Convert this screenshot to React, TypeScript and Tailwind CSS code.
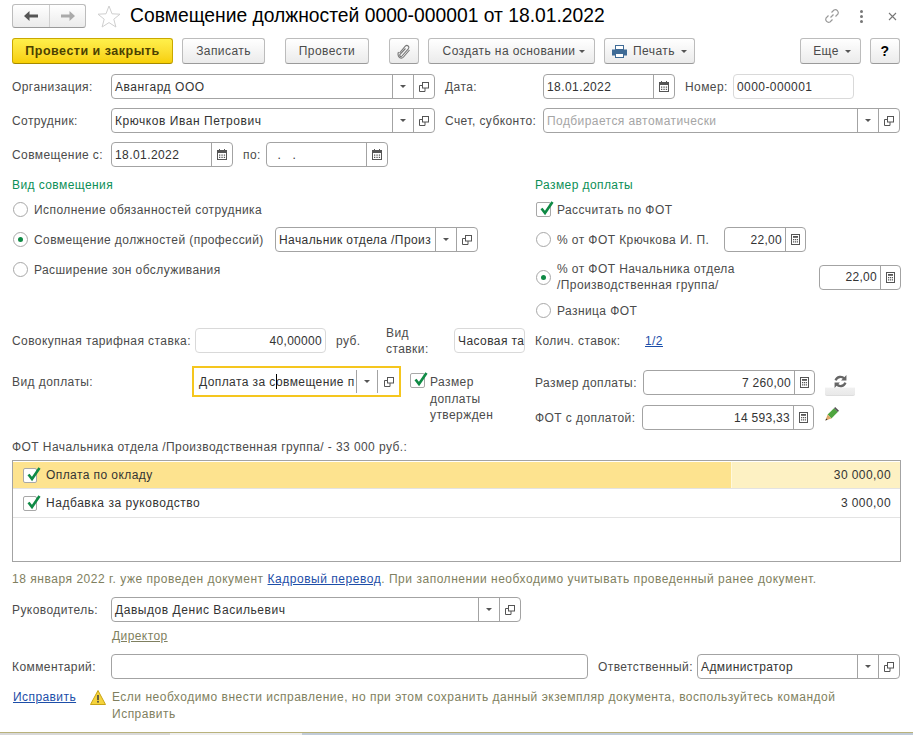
import React from "react";

const CalendarIcon = () => (
  <svg width="10" height="11" viewBox="0 0 10 11" className="block">
    <rect x="0.5" y="1.5" width="9" height="9" fill="#fff" stroke="#555" />
    <rect x="0" y="1.5" width="10" height="2.5" fill="#555" />
    <rect x="2" y="0" width="1" height="2" fill="#555" />
    <rect x="7" y="0" width="1" height="2" fill="#555" />
    <path d="M2 5.5h1.3v1.2H2zM4.4 5.5h1.3v1.2H4.4zM6.8 5.5h1.3v1.2H6.8zM2 7.8h1.3V9H2zM4.4 7.8h1.3V9H4.4zM6.8 7.8h1.3V9H6.8z" fill="#555" />
  </svg>
);

const CalcIcon = () => (
  <svg width="9" height="11" viewBox="0 0 9 11" className="block">
    <rect x="0.5" y="0.5" width="8" height="10" fill="#fff" stroke="#555" />
    <rect x="2" y="2" width="5" height="1.8" fill="#555" />
    <path d="M2 5h1.2v1.2H2zM3.9 5h1.2v1.2H3.9zM5.8 5H7v1.2H5.8zM2 7.3h1.2v1.2H2zM3.9 7.3h1.2v1.2H3.9zM5.8 7.3H7v1.2H5.8z" fill="#555" />
  </svg>
);

const OpenIcon = () => (
  <svg width="10" height="10" viewBox="0 0 10 10" className="block">
    <rect x="3.5" y="0.5" width="6" height="5.5" fill="#fff" stroke="#555" />
    <path d="M3.5 3.5H0.5V9.5H6V6" fill="none" stroke="#555" />
  </svg>
);

const Arrow = ({ color = "#555" }: { color?: string }) => (
  <span
    className="inline-block w-0 h-0 border-l-[3.5px] border-r-[3.5px] border-t-[3.5px] border-l-transparent border-r-transparent"
    style={{ borderTopColor: color }}
  />
);

const Check = () => (
  <svg width="17" height="17" viewBox="0 0 17 17" className="absolute left-[1px] -top-[3px]">
    <path d="M3.5 8.5 L7 13 L14.5 2" fill="none" stroke="#0f8a45" strokeWidth="2.6" />
  </svg>
);

const CheckBox = ({ narrow }: { narrow?: boolean }) => (
  <span
    className={`relative block shrink-0 h-[15px] bg-white border border-[#a8a8a8] rounded-[2px] ${
      narrow ? "w-[14px]" : "w-[15px]"
    }`}
  >
    <Check />
  </span>
);

const Radio = ({ on }: { on?: boolean }) => (
  <span className="flex items-center justify-center shrink-0 w-[15px] h-[15px] rounded-full bg-white border border-[#a8a8a8]">
    {on && <span className="w-[5px] h-[5px] rounded-full bg-[#0f8a45]" />}
  </span>
);

type FieldProps = {
  w: number | string;
  value?: string;
  align?: "right";
  drop?: boolean;
  open?: boolean;
  calendar?: boolean;
  calc?: boolean;
  light?: boolean;
  placeholder?: boolean;
  wide?: boolean;
};

const Field = ({ w, value, align, drop, open, calendar, calc, light, placeholder, wide }: FieldProps) => (
  <div
    className={`flex items-stretch shrink-0 h-[25px] bg-white border rounded-[4px] overflow-hidden ${
      light ? "border-[#d9d9d9]" : "border-[#a3a3a3]"
    }`}
    style={{ width: w }}
  >
    <div
      className={`flex-1 min-w-0 flex items-center px-[3px] whitespace-nowrap overflow-hidden ${
        align === "right" ? "justify-end tracking-[0.3px]" : ""
      } ${wide ? "tracking-[0.55px]" : ""} ${placeholder ? "text-[#a5a5a5]" : "text-[#333]"}`}
    >
      {value}
    </div>
    {drop && (
      <div className="flex items-center justify-center w-[21px] border-l border-[#a3a3a3]">
        <Arrow />
      </div>
    )}
    {open && (
      <div className="flex items-center justify-center w-[21px] border-l border-[#a3a3a3]">
        <OpenIcon />
      </div>
    )}
    {calendar && (
      <div className="flex items-center justify-center w-[21px] border-l border-[#a3a3a3]">
        <CalendarIcon />
      </div>
    )}
    {calc && (
      <div className="flex items-center justify-center w-[20px] border-l border-[#a3a3a3]">
        <CalcIcon />
      </div>
    )}
  </div>
);

const Btn = ({ w, children, className = "" }: { w: number; children: React.ReactNode; className?: string }) => (
  <button
    className={`flex items-center justify-center gap-[6px] shrink-0 h-[26px] rounded-[3px] border border-[#bcbcbc] border-b-[#9a9a9a] bg-gradient-to-b from-white to-[#ebebeb] text-[#4b4b4b] ${className}`}
    style={{ width: w }}
  >
    {children}
  </button>
);

const Label = ({ w, children, className = "" }: { w?: number; children: React.ReactNode; className?: string }) => (
  <span className={`shrink-0 whitespace-nowrap text-[#4b4b4b] ${className}`} style={w ? { width: w } : undefined}>
    {children}
  </span>
);

const RadioRow = ({ on, w, children }: { on?: boolean; w?: number; children: React.ReactNode }) => (
  <div className="flex items-center gap-[6px] pl-px shrink-0" style={w ? { width: w } : undefined}>
    <Radio on={on} />
    <span className="text-[#4b4b4b] whitespace-nowrap">{children}</span>
  </div>
);

export default function App() {
  return (
    <div
      className="flex flex-col w-[913px] h-[735px] overflow-hidden bg-white px-3 pt-1 text-[12px] tracking-[0.42px] leading-[16px]"
      style={{ fontFamily: '"Liberation Sans", Arial, sans-serif' }}
    >
      {/* title */}
      <div className="flex items-center h-[24px]">
        <div className="flex shrink-0 w-[74px] h-[24px] rounded-[3px] border border-[#bcbcbc] border-b-[#9a9a9a] bg-gradient-to-b from-white to-[#ebebeb]">
          <div className="flex items-center justify-center w-[37px] border-r border-[#d0d0d0]">
            <svg width="14" height="10" viewBox="0 0 14 10">
              <path d="M0 5 L5.5 0 V3.5 H14 V6.5 H5.5 V10 Z" fill="#555" />
            </svg>
          </div>
          <div className="flex items-center justify-center flex-1">
            <svg width="14" height="10" viewBox="0 0 14 10">
              <path d="M14 5 L8.5 0 V3.5 H0 V6.5 H8.5 V10 Z" fill="#aaa" />
            </svg>
          </div>
        </div>
        <svg width="24" height="23" viewBox="0 0 24 23" className="ml-[11px] shrink-0">
          <path d="M12 1 L15 8.8 L23 9.2 L16.8 14.2 L18.9 22 L12 17.6 L5.1 22 L7.2 14.2 L1 9.2 L9 8.8 Z" fill="#fff" stroke="#cfcfcf" />
        </svg>
        <div className="ml-[9px] text-[19.3px] tracking-normal text-black whitespace-nowrap">
          Совмещение должностей 0000-000001 от 18.01.2022
        </div>
        <div className="flex items-center ml-auto">
          <svg width="16" height="16" viewBox="0 0 16 16" fill="none" stroke="#999" strokeWidth="1.2">
            <path d="M6.5 9.5 L9.5 6.5" />
            <path d="M7.5 4.5 L10 2 a3 3 0 0 1 4 4 L11.5 8.5" />
            <path d="M8.5 11.5 L6 14 a3 3 0 0 1 -4 -4 L4.5 7.5" />
          </svg>
          <span className="flex flex-col gap-[2px] ml-[20px]">
            <span className="w-[3px] h-[3px] rounded-full bg-[#777]" />
            <span className="w-[3px] h-[3px] rounded-full bg-[#777]" />
            <span className="w-[3px] h-[3px] rounded-full bg-[#777]" />
          </span>
          <svg width="9" height="9" viewBox="0 0 9 9" stroke="#777" strokeWidth="1.1" className="ml-[25px] mr-[4px]">
            <path d="M1 1 L8 8 M8 1 L1 8" />
          </svg>
        </div>
      </div>

      {/* toolbar */}
      <div className="flex items-center mt-[10px]">
        <button className="flex items-center justify-center shrink-0 w-[161px] h-[26px] rounded-[3px] border border-[#c9a800] border-b-[#a58a00] bg-gradient-to-b from-[#fff04a] to-[#f7cf00] text-[#4b4100] font-bold text-[12.5px] tracking-[0.5px]">
          Провести и закрыть
        </button>
        <Btn w={83} className="ml-[9px]">Записать</Btn>
        <Btn w={84} className="ml-[20px]">Провести</Btn>
        <Btn w={30} className="ml-[20px]">
          <svg width="14" height="15" viewBox="0 0 14 15" fill="none" stroke="#777" strokeWidth="1.1">
            <path d="M2.5 9 L8.5 2 a2 2 0 0 1 3 2.6 L5 12 a1.2 1.2 0 0 1 -2 -1.6 L8.5 4.5" />
            <path d="M1.5 8 a5 5 0 0 0 1 5.5 a3 3 0 0 0 4 -0.5 L12.5 6" />
          </svg>
        </Btn>
        <Btn w={167} className="ml-[9px] pl-[5px] !gap-[4px]">
          Создать на основании
          <Arrow />
        </Btn>
        <Btn w={91} className="ml-[9px]">
          <svg width="15" height="13" viewBox="0 0 15 13" className="shrink-0">
            <rect x="3.5" y="0.5" width="8" height="4" fill="#fff" stroke="#3f6b96" />
            <path d="M0 4.5h15v6h-3v-2H3v2H0z" fill="#3f6b96" />
            <rect x="3.5" y="8.5" width="8" height="4" fill="#fff" stroke="#3f6b96" />
          </svg>
          Печать
          <Arrow />
        </Btn>
        <Btn w={61} className="ml-[105px] pl-[3px]">
          Еще
          <Arrow />
        </Btn>
        <Btn w={30} className="ml-[9px] !text-black font-bold text-[14px]">?</Btn>
      </div>

      {/* header fields */}
      <div className="flex items-center mt-[10px]">
        <Label w={99}>Организация:</Label>
        <Field w={324} value="Авангард ООО" drop open wide />
        <Label w={98} className="ml-[10px]">Дата:</Label>
        <Field w={132} value="18.01.2022" calendar />
        <Label w={48} className="ml-[10px]">Номер:</Label>
        <Field w={121} value="0000-000001" light />
      </div>
      <div className="flex items-center mt-[9px]">
        <Label w={99}>Сотрудник:</Label>
        <Field w={324} value="Крючков Иван Петрович" drop open wide />
        <Label w={98} className="ml-[10px]">Счет, субконто:</Label>
        <Field w={357} value="Подбирается автоматически" placeholder drop open />
      </div>
      <div className="flex items-center mt-[9px]">
        <Label w={99}>Совмещение с:</Label>
        <Field w={122} value="18.01.2022" calendar />
        <Label w={23} className="ml-[10px]">по:</Label>
        <Field w={122} value={"\u00a0\u00a0.\u00a0\u00a0\u00a0."} calendar />
      </div>

      {/* two columns */}
      <div className="flex mt-[10px]">
        <div className="w-[523px] shrink-0">
          <div className="h-[14px] leading-[14px] mt-px text-[#0c8f58]">Вид совмещения</div>
          <div className="flex items-center h-[25px] mt-[5px]">
            <RadioRow>Исполнение обязанностей сотрудника</RadioRow>
          </div>
          <div className="flex items-center h-[25px] mt-[5px]">
            <RadioRow on w={263}>Совмещение должностей (профессий)</RadioRow>
            <Field w={203} value="Начальник отдела /Произ" drop open />
          </div>
          <div className="flex items-center h-[25px] mt-[5px]">
            <RadioRow>Расширение зон обслуживания</RadioRow>
          </div>
          <div className="flex items-center h-[25px] mt-[46px]">
            <Label w={183}>Совокупная тарифная ставка:</Label>
            <Field w={131} value="40,00000" align="right" light />
            <Label w={50} className="ml-[10px]">руб.</Label>
            <span className="w-[68px] shrink-0 text-[#4b4b4b] leading-[16px]">
              Вид
              <br />
              ставки:
            </span>
            <Field w={71} value="Часовая та" light />
          </div>
          <div className="flex items-start mt-[13px]">
            <Label w={180} className="mt-[8px]">Вид доплаты:</Label>
            <div className="flex items-stretch shrink-0 w-[209px] h-[31px] border-2 border-[#f5c61e] bg-white">
              <div className="relative flex-1 flex items-center pl-[5px] whitespace-nowrap overflow-hidden text-[#333]">
                Доплата за совмещение п
                <span className="absolute left-[82px] top-[6px] w-px h-[15px] bg-black" />
              </div>
              <div className="flex items-center justify-center w-[21px] my-[2px] border-l border-[#a3a3a3]">
                <Arrow />
              </div>
              <div className="flex items-center justify-center w-[22px] my-[2px] border-l border-[#a3a3a3]">
                <OpenIcon />
              </div>
            </div>
            <div className="flex items-start ml-[9px] mt-[7px] gap-[5px]">
              <CheckBox />
              <span className="text-[#4b4b4b] leading-[16.5px] mt-px">
                Размер
                <br />
                доплаты
                <br />
                утвержден
              </span>
            </div>
          </div>
        </div>

        <div className="flex-1 min-w-0">
          <div className="h-[14px] leading-[14px] mt-px text-[#0c8f58]">Размер доплаты</div>
          <div className="flex items-center h-[25px] mt-[5px] gap-[6px] pl-px">
            <CheckBox />
            <span className="text-[#4b4b4b]">Рассчитать по ФОТ</span>
          </div>
          <div className="flex items-center h-[25px] mt-[5px]">
            <RadioRow w={189}>% от ФОТ Крючкова И. П.</RadioRow>
            <Field w={82} value="22,00" align="right" calc />
          </div>
          <div className="flex items-center justify-between h-[32px] mt-[9px]">
            <RadioRow on>
              % от ФОТ Начальника отдела
              <br />
              /Производственная группа/
            </RadioRow>
            <Field w={82} value="22,00" align="right" calc />
          </div>
          <div className="flex items-center h-[25px] mt-[5px]">
            <RadioRow>Разница ФОТ</RadioRow>
          </div>
          <div className="flex items-center h-[25px] mt-[5px]">
            <Label w={110}>Колич. ставок:</Label>
            <span className="text-[#1d4ea8] underline">1/2</span>
          </div>
          <div className="flex items-center h-[25px] mt-[17px]">
            <Label w={108}>Размер доплаты:</Label>
            <Field w={172} value="7 260,00" align="right" calc />
            <button className="flex items-start justify-center pt-[4px] w-[30px] h-[25px] ml-[10px] mt-px border-b border-[#dddddd] bg-[linear-gradient(#ffffff_68%,#f0f0f0_70%,#e9e9e9)] rounded-[2px]">
              <svg width="13" height="13" viewBox="0 0 12 12" fill="none" stroke="#666" strokeWidth="2.2">
                <path d="M1.5 5 a4.6 4.6 0 0 1 8 -1.5" />
                <path d="M10.5 7 a4.6 4.6 0 0 1 -8 1.5" />
                <path d="M11.5 0 V5 H6.5 Z" fill="#666" stroke="none" />
                <path d="M0.5 12 V7 H5.5 Z" fill="#666" stroke="none" />
              </svg>
            </button>
          </div>
          <div className="relative flex items-center h-[25px] mt-[10px]">
            <Label w={107}>ФОТ с доплатой:</Label>
            <Field w={172} value="14 593,33" align="right" calc />
            <svg width="14" height="14" viewBox="0 0 14 14" className="absolute left-[290px] top-[2px]">
              <path d="M2.6 7.6 L9 1.2 L12.8 5 L6.4 11.4 Z" fill="#4fa53e" />
              <path d="M9 1.2 L10.2 0 L14 3.8 L12.8 5 Z" fill="#555" />
              <path d="M2.6 7.6 L0.4 13.6 L6.4 11.4 Z" fill="#e0a868" />
              <path d="M0.4 13.6 L1.2 11.4 L2.6 12.8 Z" fill="#333" />
            </svg>
          </div>
        </div>
      </div>

      <div className="h-[14px] leading-[14px] mt-[10px] text-[#4b4b4b]">
        ФОТ Начальника отдела /Производственная группа/ - 33 000 руб.:
      </div>

      {/* table */}
      <div className="shrink-0 h-[102px] mt-[6px] border border-[#a3a3a3]">
        <div className="flex h-[27px] border-b border-[#e3e3e3] mt-px">
          <div className="flex items-center flex-1 pl-[10px] gap-[9px] bg-[#fde38f] text-[#333]">
            <CheckBox narrow />
            Оплата по окладу
          </div>
          <div className="flex items-center justify-end w-[169px] pr-[9px] border-l border-[#fff8dc] bg-[#fdf1c3] text-[#333]">
            30 000,00
          </div>
        </div>
        <div className="flex items-center justify-between h-[29px] pl-[10px] pr-[9px] border-b border-[#e3e3e3] text-[#333]">
          <div className="flex items-center gap-[9px] tracking-[0.55px]">
            <CheckBox narrow />
            Надбавка за руководство
          </div>
          <span>3 000,00</span>
        </div>
      </div>

      <div className="h-[14px] leading-[14px] mt-[10px] text-[#7f7f60] whitespace-nowrap tracking-[0.53px]">
        18 января 2022 г. уже проведен документ <span className="text-[#1d4ea8] underline">Кадровый перевод</span>. При заполнении необходимо учитывать проведенный ранее документ.
      </div>

      <div className="flex items-center mt-[11px]">
        <Label w={99}>Руководитель:</Label>
        <Field w={410} value="Давыдов Денис Васильевич" drop open wide />
      </div>
      <div className="h-[14px] leading-[14px] mt-[7px] ml-[100px] text-[#7f7f60] underline">Директор</div>
      <div className="flex items-center mt-[11px]">
        <Label w={99}>Комментарий:</Label>
        <Field w={477} />
        <Label w={99} className="ml-[10px]">Ответственный:</Label>
        <Field w={203} value="Администратор" drop open />
      </div>
      <div className="flex items-start mt-[10px]">
        <span className="w-[78px] shrink-0 pl-px text-[#1d4ea8] underline">Исправить</span>
        <svg width="16" height="15" viewBox="0 0 16 15" className="shrink-0 mt-[1px]">
          <path d="M8 0.5 L15.5 14.5 H0.5 Z" fill="#f5d33c" stroke="#c9a415" />
          <rect x="7.2" y="5" width="1.6" height="5.2" fill="#444" />
          <rect x="7.2" y="11" width="1.6" height="1.6" fill="#444" />
        </svg>
        <span className="ml-[6px] text-[#7f7f60] leading-[16.5px] tracking-[0.5px]">
          Если необходимо внести исправление, но при этом сохранить данный экземпляр документа, воспользуйтесь командой
          <br />
          Исправить
        </span>
      </div>

      {/* window edge */}
      <div className="flex mt-auto -mx-3 h-[3px] border-t border-[#b9b27c]">
        <div className="w-[170px] bg-[#d8d8d8]" />
        <div className="w-[132px] bg-[#eeeeee]" />
        <div className="flex-1 bg-[#c0cbd8]" />
      </div>
    </div>
  );
}
